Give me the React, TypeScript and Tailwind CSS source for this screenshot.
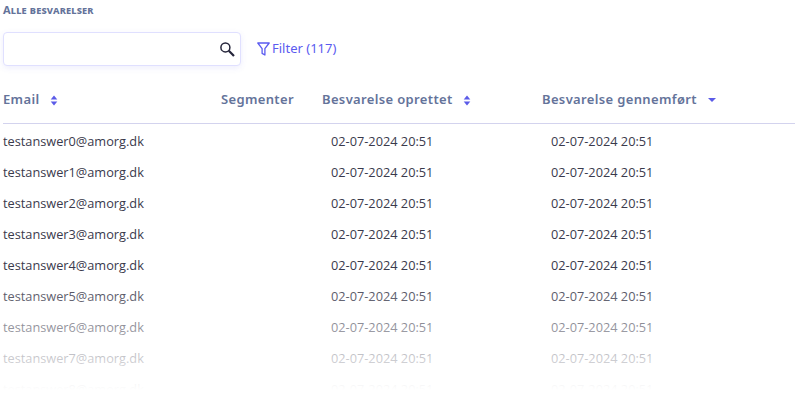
const rows = [0, 1, 2, 3, 4, 5, 6, 7, 8];

function SortIcon() {
  return (
    <svg width="8" height="11" viewBox="0 0 8 11" className="fill-[#5b5be8]">
      <path d="M4 0.5 7.3 4.4H0.7Z" />
      <path d="M4 10.5 0.7 6.6H7.3Z" />
    </svg>
  );
}

function SearchIcon() {
  return (
    <svg width="17" height="17" viewBox="0 0 17 17" fill="none" className="stroke-[#24243a]">
      <circle cx="6.4" cy="6.4" r="4.5" strokeWidth="1.5" />
      <path d="M9.8 9.8 15 15" strokeWidth="2.2" />
    </svg>
  );
}

function FilterIcon() {
  return (
    <svg width="13" height="14" viewBox="0 0 13 14" fill="none" strokeWidth="1.3" strokeLinejoin="round" className="stroke-[#5b5bf0]">
      <path d="M0.8 1H12.2L7.9 6.6V13L5.1 11.4V6.6Z" />
    </svg>
  );
}

export default function App() {
  return (
    <div className="relative h-[400px] w-[800px] overflow-hidden bg-white font-['Noto_Sans',sans-serif]">
      <h2 className="pl-[3px] pt-[1px] text-[11px] font-bold leading-[18px] tracking-[0.15px] text-[#64739a] [font-variant:small-caps]">
        Alle besvarelser
      </h2>

      <div className="mt-[13px] flex items-center pl-[3px]">
        <div className="flex h-[34px] w-[238px] items-center justify-end rounded-[4px] border border-[#e0e0ff] bg-white pr-[4px] shadow-[0_2px_6px_rgba(90,90,240,0.1)]">
          <SearchIcon />
        </div>
        <div className="ml-[16px] flex items-center gap-[2px] text-[13px] text-[#5b5bf0]">
          <FilterIcon />
          <span>Filter (117)</span>
        </div>
      </div>

      <div className="mx-[3px] mt-[16px] w-[792px]">
        <div className="grid h-[42px] grid-cols-[218px_101px_220px_1fr] items-center border-b border-[#d3d3ee] pb-[5px] text-[13px] font-semibold tracking-[0.35px] text-[#64739a]">
          <div className="flex items-center gap-[11px]">
            Email <SortIcon />
          </div>
          <div>Segmenter</div>
          <div className="flex items-center gap-[10px]">
            Besvarelse oprettet <SortIcon />
          </div>
          <div className="flex items-center gap-[11px]">
            Besvarelse gennemført
            <span className="h-0 w-0 border-x-[4px] border-t-[4px] border-x-transparent border-t-[#5b5be8]" />
          </div>
        </div>

        <div className="pt-[2px]">
          {rows.map((n) => (
            <div key={n} className="grid h-[31px] grid-cols-[218px_110px_220px_1fr] items-center font-['Open_Sans',sans-serif] text-[12.75px] text-[#3a3a4c]">
              <div>testanswer{n}@amorg.dk</div>
              <div />
              <div>02-07-2024 20:51</div>
              <div>02-07-2024 20:51</div>
            </div>
          ))}
        </div>
      </div>

      {/* white fade over the last rows of the list */}
      <div className="pointer-events-none absolute inset-x-0 bottom-0 h-[125px] bg-gradient-to-b from-transparent to-white to-[92%]" />
    </div>
  );
}
